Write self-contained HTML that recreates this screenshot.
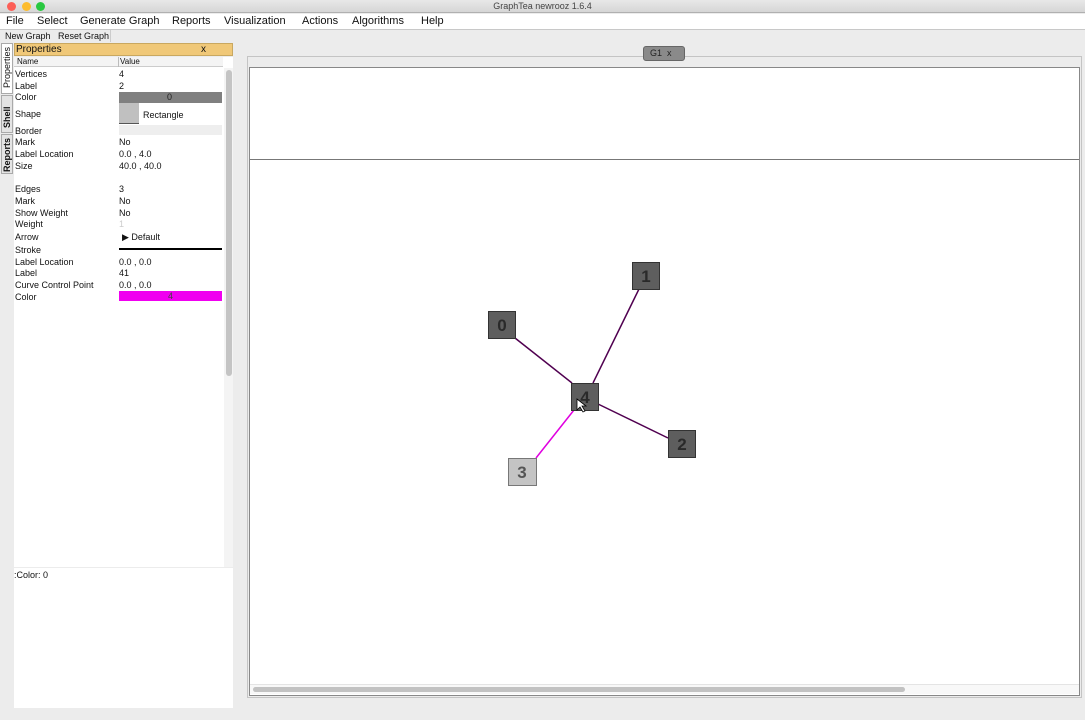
<!DOCTYPE html>
<html><head><style>
*{margin:0;padding:0;box-sizing:border-box}
body{width:1085px;height:720px;background:#ececec;font-family:"Liberation Sans",sans-serif;position:relative;overflow:hidden;color:#111}
.a{position:absolute}
.t{font-size:9px;white-space:nowrap;line-height:10px}
.m{position:absolute;top:15px;font-size:11px;white-space:nowrap}
</style></head><body>
<div class="a" style="left:0;top:0;width:1085px;height:13px;background:linear-gradient(#e8e8e8,#d6d6d6);border-bottom:1px solid #b0b0b0"></div>
<div class="a" style="left:7px;top:2px;width:9px;height:9px;border-radius:50%;background:#fc5f57"></div>
<div class="a" style="left:22px;top:2px;width:9px;height:9px;border-radius:50%;background:#fdbc2e"></div>
<div class="a" style="left:36px;top:2px;width:9px;height:9px;border-radius:50%;background:#29c840"></div>
<div class="a t" style="left:0;width:1085px;top:1px;text-align:center;font-size:9px;color:#444">GraphTea newrooz 1.6.4</div>
<div class="a" style="left:0;top:14px;width:1085px;height:16px;background:#fff;border-bottom:1px solid #c8c8c8"></div>
<div class="m" style="left:6px">File</div><div class="m" style="left:37px">Select</div><div class="m" style="left:80px">Generate Graph</div><div class="m" style="left:172px">Reports</div><div class="m" style="left:224px">Visualization</div><div class="m" style="left:302px">Actions</div><div class="m" style="left:352px">Algorithms</div><div class="m" style="left:421px">Help</div>
<div class="a t" style="left:5px;top:31px;font-size:9px">New Graph&nbsp;&nbsp; Reset Graph</div>
<div class="a" style="left:110px;top:30px;width:1px;height:12px;background:#ccc"></div>
<div class="a" style="left:1px;top:43px;width:12px;height:51px;background:#fff;border:1px solid #aaa"></div>
<div class="a t" style="left:2px;top:88px;transform:rotate(-90deg);transform-origin:0 0;font-size:9px">Properties</div>
<div class="a" style="left:1px;top:95px;width:12px;height:38px;background:#e4e4e4;border:1px solid #aaa"></div>
<div class="a t" style="left:2px;top:128px;transform:rotate(-90deg);transform-origin:0 0;font-size:9px;font-weight:bold">Shell</div>
<div class="a" style="left:1px;top:134px;width:12px;height:40px;background:#e4e4e4;border:1px solid #aaa"></div>
<div class="a t" style="left:2px;top:172px;transform:rotate(-90deg);transform-origin:0 0;font-size:9px;font-weight:bold">Reports</div>
<div class="a" style="left:14px;top:43px;width:219px;height:13px;background:#f0c878;border:1px solid #c9a860"></div>
<div class="a t" style="left:16px;top:45px;font-size:10px">Properties</div>
<div class="a t" style="left:201px;top:45px;font-size:10px">x</div>
<div class="a" style="left:14px;top:57px;width:219px;height:510px;background:#fff"></div>
<div class="a" style="left:14px;top:57px;width:209px;height:10px;background:#f4f4f4;border-bottom:1px solid #ccc"></div>
<div class="a" style="left:118px;top:57px;width:1px;height:10px;background:#bbb"></div>
<div class="a t" style="left:17px;top:57px;font-size:8px">Name</div>
<div class="a t" style="left:120px;top:57px;font-size:8px">Value</div>
<div class="a" style="left:224px;top:68px;width:9px;height:499px;background:#f4f4f4"></div>
<div class="a" style="left:226px;top:70px;width:6px;height:306px;background:#c4c4c4;border-radius:3px"></div>
<div class="a" style="left:119px;top:92px;width:103px;height:11px;background:#808080"></div>
<div class="a t" style="left:167px;top:92px;color:#222">0</div>
<div class="a" style="left:119px;top:103px;width:20px;height:21px;background:#c0c0c0;border-bottom:1px solid #555"></div>
<div class="a t" style="left:143px;top:110px">Rectangle</div>
<div class="a" style="left:119px;top:125px;width:103px;height:10px;background:#eee"></div>
<div class="a" style="left:119px;top:248px;width:103px;height:2px;background:#000"></div>
<div class="a" style="left:119px;top:291px;width:103px;height:10px;background:#f000f0"></div>
<div class="a t" style="left:168px;top:291px;color:#444">4</div>
<div class="a t" style="left:122px;top:232px">▶ Default</div>
<div class="a t" style="left:15px;top:69px">Vertices</div><div class="a t" style="left:119px;top:69px">4</div>
<div class="a t" style="left:15px;top:81px">Label</div><div class="a t" style="left:119px;top:81px">2</div>
<div class="a t" style="left:15px;top:92px">Color</div>
<div class="a t" style="left:15px;top:109px">Shape</div>
<div class="a t" style="left:15px;top:126px">Border</div>
<div class="a t" style="left:15px;top:137px">Mark</div><div class="a t" style="left:119px;top:137px">No</div>
<div class="a t" style="left:15px;top:149px">Label Location</div><div class="a t" style="left:119px;top:149px">0.0 , 4.0</div>
<div class="a t" style="left:15px;top:161px">Size</div><div class="a t" style="left:119px;top:161px">40.0 , 40.0</div>
<div class="a t" style="left:15px;top:184px">Edges</div><div class="a t" style="left:119px;top:184px">3</div>
<div class="a t" style="left:15px;top:196px">Mark</div><div class="a t" style="left:119px;top:196px">No</div>
<div class="a t" style="left:15px;top:208px">Show Weight</div><div class="a t" style="left:119px;top:208px">No</div>
<div class="a t" style="left:15px;top:219px">Weight</div><div class="a t" style="left:119px;top:219px;color:#ccc">1</div>
<div class="a t" style="left:15px;top:232px">Arrow</div>
<div class="a t" style="left:15px;top:245px">Stroke</div>
<div class="a t" style="left:15px;top:257px">Label Location</div><div class="a t" style="left:119px;top:257px">0.0 , 0.0</div>
<div class="a t" style="left:15px;top:268px">Label</div><div class="a t" style="left:119px;top:268px">41</div>
<div class="a t" style="left:15px;top:280px">Curve Control Point</div><div class="a t" style="left:119px;top:280px">0.0 , 0.0</div>
<div class="a t" style="left:15px;top:292px">Color</div>
<div class="a" style="left:14px;top:568px;width:219px;height:140px;background:#fff"></div>
<div class="a t" style="left:14px;top:570px;font-size:9px">:Color: 0</div>
<div class="a" style="left:247px;top:56px;width:835px;height:642px;border:1px solid #c4c4c4;background:#ececec"></div>
<div class="a" style="left:643px;top:46px;width:42px;height:15px;background:#8a8a8a;border:1px solid #666;border-radius:3px"></div>
<div class="a t" style="left:650px;top:48px;color:#222">G1&nbsp; x</div>
<div class="a" style="left:249px;top:67px;width:831px;height:629px;border:1px solid #888;background:#fff"></div>
<div class="a" style="left:250px;top:159px;width:829px;height:1px;background:#777"></div>
<div class="a" style="left:250px;top:684px;width:829px;height:10px;background:#f8f8f8;border-top:1px solid #e4e4e4"></div>
<div class="a" style="left:253px;top:687px;width:652px;height:5px;background:#c2c2c2;border-radius:3px"></div>
<svg class="a" style="left:0;top:0" width="1085" height="720">
<g stroke-width="1.5">
<line x1="515" y1="338" x2="572" y2="383" stroke="#500050"/>
<line x1="639" y1="289" x2="593" y2="383" stroke="#500050"/>
<line x1="598" y1="404" x2="668" y2="438" stroke="#500050"/>
<line x1="574" y1="410" x2="536" y2="458" stroke="#e000e0"/>
</g>
<g stroke="#333" stroke-width="1" font-family="Liberation Sans" font-size="17" font-weight="bold">
<rect x="488.5" y="311.5" width="27" height="27" fill="#5e5e5e"/>
<rect x="632.5" y="262.5" width="27" height="27" fill="#5e5e5e"/>
<rect x="571.5" y="383.5" width="27" height="27" fill="#5e5e5e"/>
<rect x="668.5" y="430.5" width="27" height="27" fill="#5e5e5e"/>
<rect x="508.5" y="458.5" width="28" height="27" fill="#c4c4c4" stroke="#777"/>
<g stroke="none" fill="#2a2a2a" text-anchor="middle">
<text x="502" y="331">0</text><text x="646" y="282">1</text><text x="585" y="403">4</text><text x="682" y="450">2</text><text x="522" y="478" fill="#555">3</text>
</g></g>
<path d="M577 399 L577 410 L580 407 L583 412 L585 411 L582 406 L586 406 Z" fill="#fff" stroke="#000" stroke-width="0.8"/>
</svg>
</body></html>
